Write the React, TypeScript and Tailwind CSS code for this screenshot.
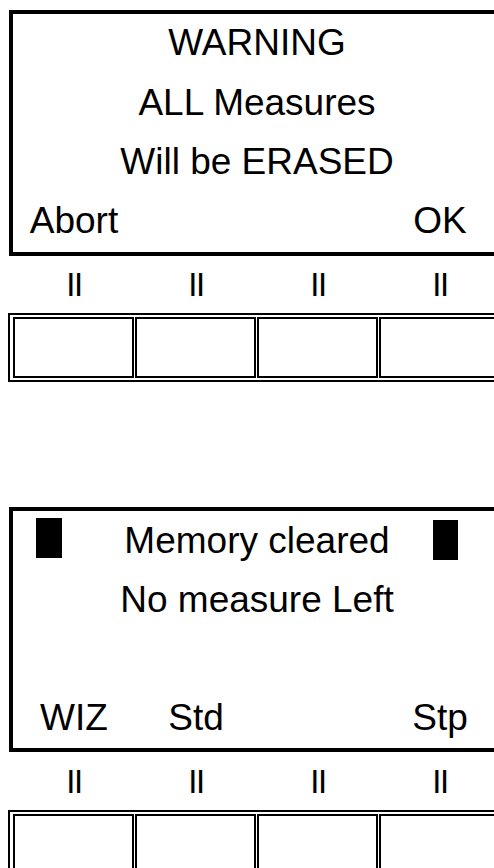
import React from "react";

const font = { fontFamily: '"Liberation Sans", Arial, sans-serif' };

function Marks() {
  return (
    <div className="ml-[13px] grid h-[57px] w-[488px] grid-cols-4 text-center text-[33px] leading-[57px] tracking-[-1.5px] text-black">
      <span>II</span>
      <span>II</span>
      <span>II</span>
      <span>II</span>
    </div>
  );
}

function Keys() {
  return (
    <div className="ml-[8px] w-[510px] border-2 border-black pl-[3px] pt-[2px] pb-[2px]">
      <div className="grid grid-cols-[repeat(4,121px)] gap-[1px]">
        <div className="h-[61px] border-2 border-black" />
        <div className="h-[61px] border-2 border-black" />
        <div className="h-[61px] border-2 border-black" />
        <div className="h-[61px] border-2 border-black" />
      </div>
    </div>
  );
}

export default function App() {
  return (
    <div
      className="relative h-[868px] w-[494px] overflow-hidden bg-white pt-[10px] text-black"
      style={font}
    >
      {/* Panel 1 */}
      <div className="ml-[9px] w-[496px] border-4 border-black pb-[2px] text-[37px]">
        <div className="h-[59px] text-center leading-[57px]">WARNING</div>
        <div className="h-[59px] text-center leading-[59px]">ALL Measures</div>
        <div className="h-[59px] text-center leading-[59px]">Will be ERASED</div>
        <div className="grid h-[59px] grid-cols-4 text-center leading-[59px]">
          <span>Abort</span>
          <span />
          <span />
          <span>OK</span>
        </div>
      </div>
      <Marks />
      <Keys />

      <div className="h-[125px]" />

      {/* Panel 2 */}
      <div className="ml-[9px] w-[496px] border-4 border-black pb-[1px] text-[37px]">
        <div className="relative h-[59px] text-center leading-[59px]">
          <span className="absolute left-[23px] top-[7px] h-[40px] w-[26px] bg-black" />
          Memory cleared
          <span className="absolute left-[420px] top-[9px] h-[40px] w-[25px] bg-black" />
        </div>
        <div className="h-[59px] text-center leading-[59px]">No measure Left</div>
        <div className="h-[59px]" />
        <div className="grid h-[59px] grid-cols-4 text-center leading-[59px]">
          <span>WIZ</span>
          <span>Std</span>
          <span />
          <span>Stp</span>
        </div>
      </div>
      <div className="h-[1px]" />
      <Marks />
      <Keys />
    </div>
  );
}
